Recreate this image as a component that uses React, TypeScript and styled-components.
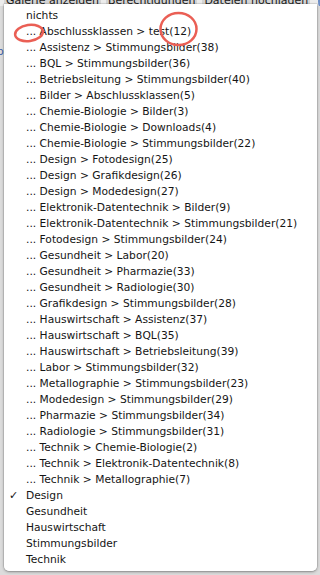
import styled, { createGlobalStyle } from "styled-components";

const GlobalStyle = createGlobalStyle`
    html, body {
        margin: 0;
        padding: 0;
    }
    body {
        font-family: "DejaVu Sans", "Liberation Sans", sans-serif;
        background: #d9d9d9;
    }
`;

export default function App() {
    return (
        <Page>
            <GlobalStyle />
            <TopBar>
                <Tab>Galerie anzeigen</Tab>
                <Tab>Berechtigungen</Tab>
                <Tab>Dateien hochladen</Tab>
                <InfoDot />
            </TopBar>
            <SideText>ispl</SideText>
            <Menu>
                {datas.map((d) => (
                    <Item key={d.label}>
                        <Check>{d.checked ? "✓" : ""}</Check>
                        <Label>{d.label}</Label>
                    </Item>
                ))}
            </Menu>
            <Marks width="320" height="575" viewBox="0 0 320 575">
                <ellipse cx="29" cy="33" rx="14" ry="8" fill="none" stroke="#ea5f55" strokeWidth="2.5" transform="rotate(-8 29 33)" />
                <ellipse cx="178.5" cy="29" rx="18" ry="16" fill="none" stroke="#ea5f55" strokeWidth="2.5" />
            </Marks>
        </Page>
    );
}

const Page = styled.div`
    position: relative;
    width: 320px;
    height: 575px;
    overflow: hidden;
    background: #dcdcdc;
`;

const TopBar = styled.div`
    display: flex;
    align-items: flex-start;
    gap: 5px;
    height: 6px;
    padding: 0 0 0 4px;
    background: #ececec;
    overflow: hidden;
`;

const Tab = styled.div`
    font-size: 11px;
    line-height: 12px;
    height: 12px;
    padding: 0 2px;
    color: #1a1a1a;
    background: #d4d4d4;
    transform: translateY(-5px);
    white-space: nowrap;
`;

const InfoDot = styled.div`
    margin-left: auto;
    width: 11px;
    height: 11px;
    border-radius: 50%;
    background: #6d8fc7;
    transform: translate(3px, -4px);
`;

const SideText = styled.div`
    position: absolute;
    left: -12px;
    top: 45px;
    font-size: 11px;
    color: #3b5ea8;
`;

const Menu = styled.ul`
    position: absolute;
    left: 4px;
    top: 4px;
    width: 313px;
    margin: 0;
    padding: 3px 0 4px;
    list-style: none;
    background: rgba(255, 255, 255, 0.98);
    border-radius: 0 0 5px 5px;
    box-shadow: 0 1px 3px rgba(0, 0, 0, 0.35), 0 0 0 0.5px rgba(0, 0, 0, 0.15);
`;

const Item = styled.li`
    display: flex;
    align-items: center;
    height: 16px;
    font-size: 10.7px;
    color: #151515;
    white-space: nowrap;
`;

const Check = styled.span`
    width: 22px;
    padding-left: 5px;
    box-sizing: border-box;
    font-size: 11px;
    font-weight: bold;
`;

const Label = styled.span``;

const Marks = styled.svg`
    position: absolute;
    left: 0;
    top: 0;
    pointer-events: none;
`;

const sub = [
    "Abschlussklassen > test(12)",
    "Assistenz > Stimmungsbilder(38)",
    "BQL > Stimmungsbilder(36)",
    "Betriebsleitung > Stimmungsbilder(40)",
    "Bilder > Abschlussklassen(5)",
    "Chemie-Biologie > Bilder(3)",
    "Chemie-Biologie > Downloads(4)",
    "Chemie-Biologie > Stimmungsbilder(22)",
    "Design > Fotodesign(25)",
    "Design > Grafikdesign(26)",
    "Design > Modedesign(27)",
    "Elektronik-Datentechnik > Bilder(9)",
    "Elektronik-Datentechnik > Stimmungsbilder(21)",
    "Fotodesign > Stimmungsbilder(24)",
    "Gesundheit > Labor(20)",
    "Gesundheit > Pharmazie(33)",
    "Gesundheit > Radiologie(30)",
    "Grafikdesign > Stimmungsbilder(28)",
    "Hauswirtschaft > Assistenz(37)",
    "Hauswirtschaft > BQL(35)",
    "Hauswirtschaft > Betriebsleitung(39)",
    "Labor > Stimmungsbilder(32)",
    "Metallographie > Stimmungsbilder(23)",
    "Modedesign > Stimmungsbilder(29)",
    "Pharmazie > Stimmungsbilder(34)",
    "Radiologie > Stimmungsbilder(31)",
    "Technik > Chemie-Biologie(2)",
    "Technik > Elektronik-Datentechnik(8)",
    "Technik > Metallographie(7)",
];

const datas = [
    { label: "nichts", checked: false },
    ...sub.map((s) => ({ label: "... " + s, checked: false })),
    { label: "Design", checked: true },
    { label: "Gesundheit", checked: false },
    { label: "Hauswirtschaft", checked: false },
    { label: "Stimmungsbilder", checked: false },
    { label: "Technik", checked: false },
];
